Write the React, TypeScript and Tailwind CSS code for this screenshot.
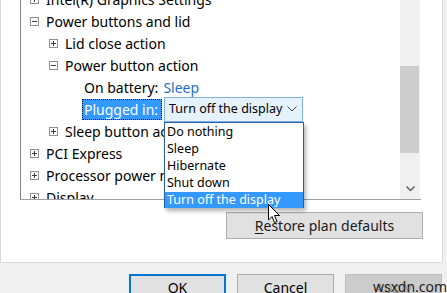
import React from "react";

const font = { fontFamily: '"Noto Sans", "Open Sans", sans-serif' };

const Box = ({ open }: { open?: boolean }) => (
  <span className="relative inline-block w-[9px] h-[9px] border border-[#919191] bg-white shrink-0">
    <span className="absolute left-[1px] right-[1px] top-[3px] h-px bg-[#3c3c3c]" />
    {!open && <span className="absolute top-[1px] bottom-[1px] left-[3px] w-px bg-[#3c3c3c]" />}
  </span>
);

const Node = ({ level, open, children }: { level: 1 | 2; open?: boolean; children: React.ReactNode }) => (
  <div className={`h-[22px] flex items-center gap-[7px] whitespace-nowrap ${level === 1 ? "pl-[9px]" : "pl-[28px]"}`}>
    <Box open={open} />
    <span>{children}</span>
  </div>
);

const App: React.FC = () => {
  return (
    <div className="relative w-[447px] h-[293px] bg-[#f0f0f0] overflow-hidden text-black" style={font}>
      <div className="w-[443px] h-[263px] bg-white border-l border-r border-b border-[#dadada] flex flex-col">
        <div className="ml-[19px] w-[401px] h-[200px] border-l border-b border-l-[#828282] border-b-[#a0a0a0] flex">
          <div className="w-[379px] h-[199px] overflow-hidden text-[14px]">
            <div className="-mt-[12px]">
              <Node level={1}>Intel(R) Graphics Settings</Node>
              <Node level={1} open>Power buttons and lid</Node>
              <Node level={2}>Lid close action</Node>
              <Node level={2} open>Power button action</Node>
              <div className="h-[22px] flex items-center pl-[63px] whitespace-nowrap">
                On battery: <span className="ml-[5px] text-[#1f6fc5]">Sleep</span>
              </div>
              <div className="h-[22px] flex items-center pl-[61px] whitespace-nowrap">
                <span className="w-[80px] h-[21px] px-[2px] flex items-center bg-[#3399ff] text-white outline-1 outline-dotted outline-[#1a1a1a] -outline-offset-1">
                  Plugged in:
                </span>
                <div className="ml-[2px] w-[139px] h-[25px] border border-[#7eb4ea] bg-[#e5f1fb] flex items-center pl-[4px] pr-[5px] text-[12.5px]">
                  <span className="flex-1">Turn off the display</span>
                  <svg width="10" height="6" viewBox="0 0 10 6" fill="none" stroke="#404040" strokeWidth="1">
                    <path d="M0.5 0.5 L5 5 L9.5 0.5" />
                  </svg>
                </div>
              </div>
              <Node level={2}>Sleep button action</Node>
              <Node level={1}>PCI Express</Node>
              <Node level={1}>Processor power management</Node>
              <Node level={1}>Display</Node>
            </div>
          </div>
          <div className="w-[20px] h-[199px] bg-[#f0f0f0] flex flex-col items-center">
            <div className="mt-[66px] w-[19px] h-[87px] self-start bg-[#cdcdcd]" />
            <div className="mt-auto mb-[8px]">
              <svg width="9" height="5" viewBox="0 0 9 5" fill="none" stroke="#606060" strokeWidth="1.5">
                <path d="M0.5 0.5 L4.5 4.5 L8.5 0.5" />
              </svg>
            </div>
          </div>
        </div>
        <button className="mt-[12px] ml-[225px] w-[197px] h-[27px] bg-[#e1e1e1] border border-[#adadad] text-[14px] text-[#1a1a1a]">
          <span className="underline underline-offset-2">R</span>estore plan defaults
        </button>
      </div>

      <div className="mt-[11px] ml-[129px] flex gap-[11px] text-[14px]">
        <button className="w-[97px] h-[26px] bg-[#e1e1e1] border-2 border-[#0078d7]">OK</button>
        <button className="w-[97px] h-[26px] bg-[#e1e1e1] border border-[#adadad]">Cancel</button>
        <button className="w-[97px] h-[26px] bg-[#cccccc] border border-[#bfbfbf] text-[#9a9a9a]">Apply</button>
      </div>

      <div className="absolute left-[164px] top-[122px] w-[140px] h-[86px] bg-white border border-[#2a5ea8] shadow-[2px_3px_4px_rgba(0,0,0,0.3)] text-[12.5px] flex flex-col pt-[1px]">
        <div className="h-[17px] flex items-center pl-[2px]">Do nothing</div>
        <div className="h-[17px] flex items-center pl-[2px]">Sleep</div>
        <div className="h-[17px] flex items-center pl-[2px]">Hibernate</div>
        <div className="h-[17px] flex items-center pl-[2px]">Shut down</div>
        <div className="h-[16px] flex items-center pl-[2px] bg-[#3399ff] text-white">Turn off the display</div>
      </div>

      <svg className="absolute left-[268px] top-[204px]" width="13" height="20" viewBox="0 0 13 20">
        <path d="M0.5 0.5 L0.5 16 L4 12.5 L6.5 18.5 L9 17.5 L6.5 11.5 L11.5 11.5 Z" fill="white" stroke="black" strokeWidth="1" />
      </svg>

      <div className="absolute left-[373px] top-[276px] text-[14px] text-[#222]">wsxdn.com</div>
    </div>
  );
};

export default App;
